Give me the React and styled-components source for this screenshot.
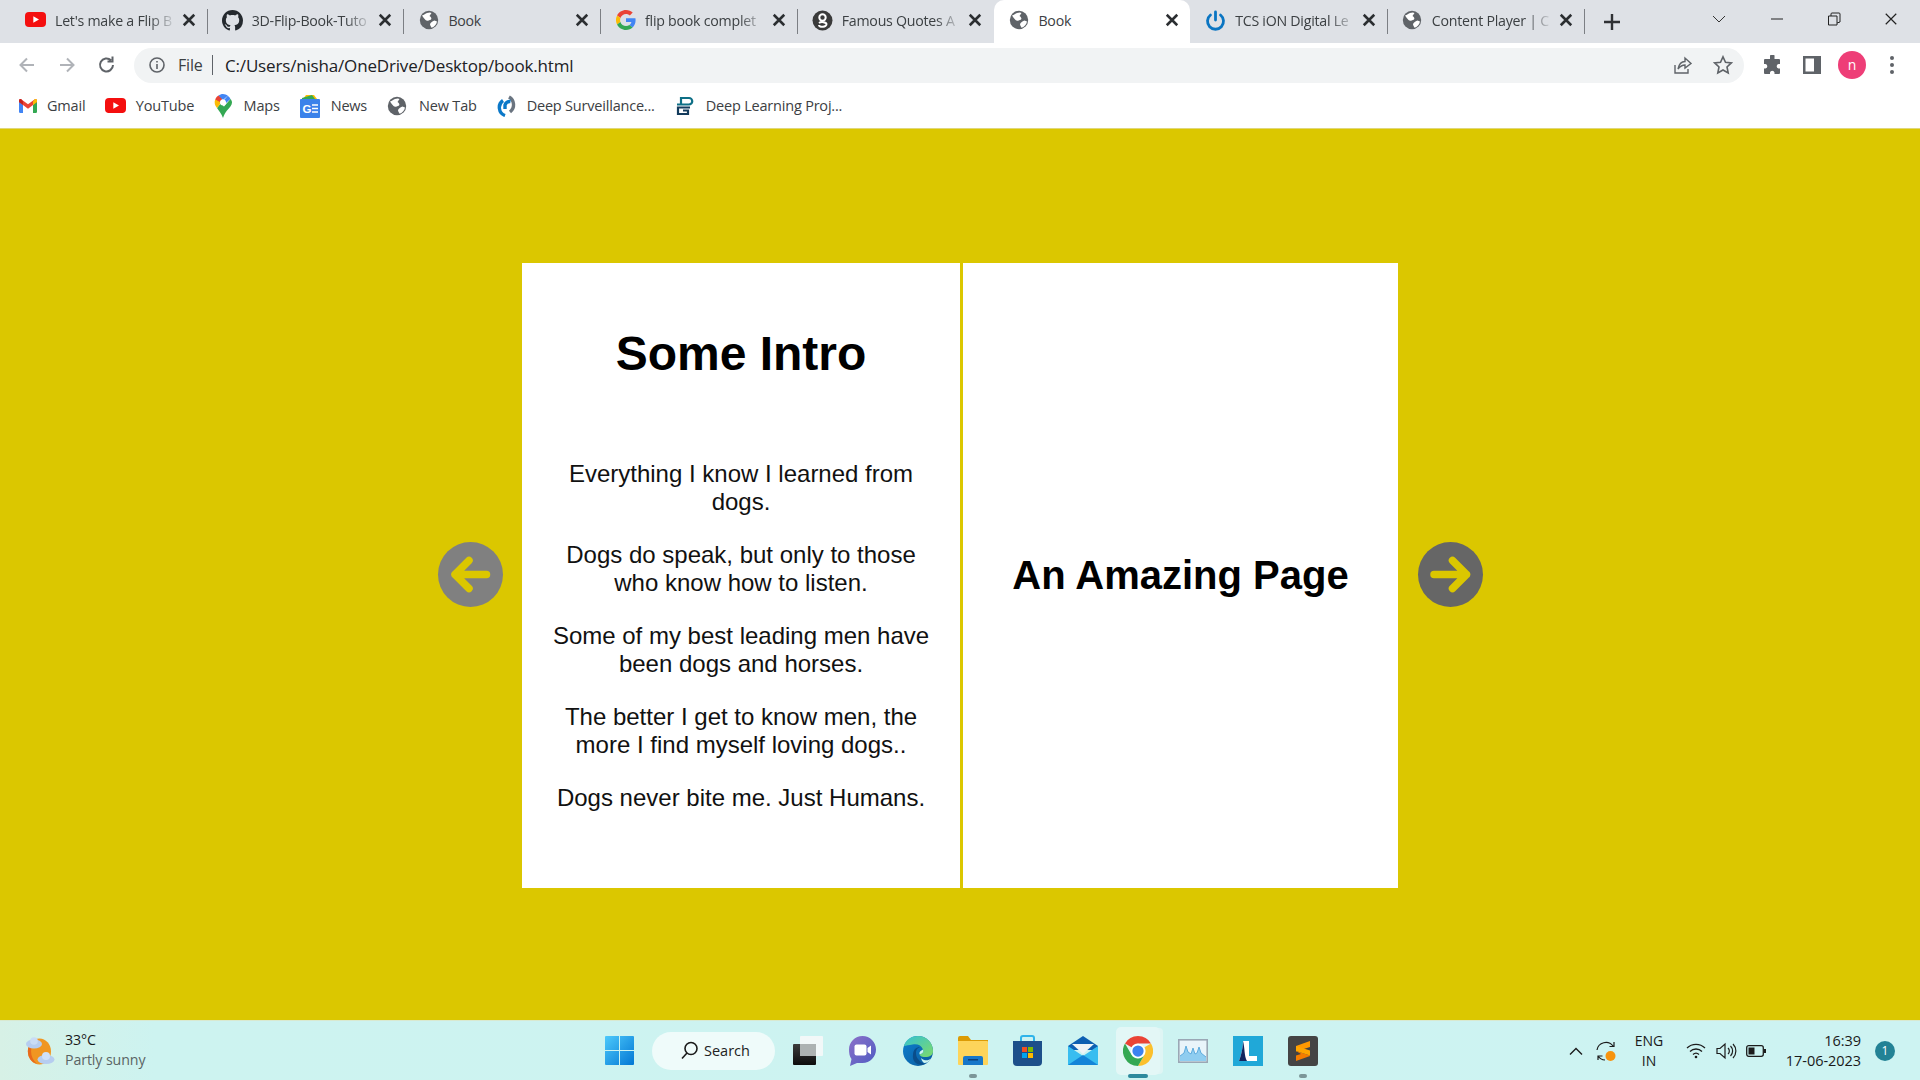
import React from "react";
import styled, { createGlobalStyle } from "styled-components";

const Global = createGlobalStyle`
  html, body { margin: 0; padding: 0; background: #dbc700; }
  * { box-sizing: border-box; }
`;
const Shell = styled.div`
  width: 1920px; height: 1080px; display: flex; flex-direction: column; overflow: hidden;
  font-family: "Open Sans", "Liberation Sans", sans-serif;
`;
const TabStrip = styled.div`
  height: 43px; background: #dee1e6; display: flex; align-items: stretch; padding-left: 11px; flex: none;
`;
const Tab = styled.div`
  width: 195.7px; flex: none; height: 43px; display: flex; align-items: center; padding: 0 11px 3px 14px;
  background: ${p => (p.$active ? "#fff" : "transparent")};
  border-radius: ${p => (p.$active ? "10px 10px 0 0" : "0")};
  color: #3c4043;
`;
const Favicon = styled.span`
  width: 21px; height: 21px; flex: none; display: flex; align-items: center; justify-content: center; margin-right: 9px;
`;
const TabTitle = styled.span`
  flex: 1; min-width: 0; overflow: hidden; white-space: nowrap; font-size: 14.2px; letter-spacing: -0.25px;
  -webkit-mask-image: ${p => (p.$fade ? "linear-gradient(to right,#000 78%,transparent 100%)" : "none")};
  mask-image: ${p => (p.$fade ? "linear-gradient(to right,#000 78%,transparent 100%)" : "none")};
`;
const TabClose = styled.span`
  width: 14px; height: 14px; flex: none; display: flex; margin-left: 6px; color: #2b2e31;
`;
const TabSep = styled.span`
  width: 1px; height: 25px; margin-top: 9px; flex: none; background: ${p => (p.$hidden ? "transparent" : "#7c7f84")};
`;
const NewTab = styled.span`
  width: 54px; display: flex; align-items: center; justify-content: center; color: #2f3134; flex: none;
`;
const Spacer = styled.div`flex: 1;`;
const WinChevron = styled.span`
  width: 30px; margin-right: 14px; display: flex; align-items: center; justify-content: center; height: 38px; color: #333; flex: none;
`;
const WinBtn = styled.span`
  width: ${p => p.$w || 57}px; height: 38px; display: flex; align-items: center; justify-content: center; color: #222; flex: none;
`;
const Toolbar = styled.div`
  height: 43px; background: #fff; display: flex; align-items: center; padding: 1px 0 0 7px; flex: none;
`;
const NavBtn = styled.span`
  width: 40px; height: 36px; flex: none; display: flex; align-items: center; justify-content: center;
  color: ${p => (p.$dim ? "#b0b3b8" : "#5f6368")};
`;
const AddressBar = styled.div`
  width: 1610px; height: 35px; margin: 0 0 0 7px; background: #f1f3f4; border-radius: 18px; display: flex; align-items: center; padding: 0 1px 0 14px; flex: none;
`;
const InfoIcon = styled.span`
  width: 18px; height: 18px; display: flex; color: #5f6368; flex: none;
`;
const FileLabel = styled.span`
  margin-left: 12px; font-size: 16px; color: #3c4043; letter-spacing: -0.2px; width: 34px; flex: none;
`;
const AddrDivider = styled.span`
  width: 1px; height: 20px; background: #5f6368; flex: none; margin-right: 12px;
`;
const UrlText = styled.span`
  font-size: 17px; color: #202124; white-space: nowrap; flex: 1; letter-spacing: -0.17px;
`;
const AddrAction = styled.span`
  width: 40px; height: 30px; flex: none; display: flex; align-items: center; justify-content: center; color: #5f6368;
`;
const ToolGroup = styled.div`
  display: flex; margin-left: 8px; align-items: center; flex: none;
`;
const Avatar = styled.span`
  width: 28px; height: 28px; border-radius: 50%; background: #ee3e77; color: #fff; font-size: 14px; display: flex; align-items: center; justify-content: center; padding-bottom: 2px;
`;
const Bookmarks = styled.div`
  height: 43px; background: #fff; border-bottom: 1px solid #e0d77a; display: flex; align-items: center; gap: 20px; padding: 0 0 3px 19px; flex: none;
`;
const Bookmark = styled.span`
  display: flex; align-items: center; gap: ${p => p.$gap || 10}px; font-size: 14.5px; color: #3c4043; letter-spacing: -0.2px; white-space: nowrap;
`;
const Stage = styled.main`
  flex: 1; background: #dbc700; display: flex; align-items: center; justify-content: center; gap: 19px; padding-left: 1px;
`;
const ArrowBtn = styled.button`
  width: 65px; height: 65px; padding: 0; border: none; border-radius: 50%; flex: none; display: flex;
  background: ${p => (p.$dark ? "#666666" : "#808080")}; color: #dbc700;
`;
const Book = styled.div`
  display: flex; gap: 3px; height: 625px; margin: 2px 1px 0 0; flex: none;
`;
const LeftPage = styled.section`
  width: 438px; background: #fff; padding: 64px 30px 0; text-align: center; font-family: "Liberation Sans", Arial, sans-serif; color: #000;
`;
const RightPage = styled.section`
  width: 435px; background: #fff; display: flex; align-items: center; justify-content: center; font-family: "Liberation Sans", Arial, sans-serif; color: #000;
`;
const PageTitle = styled.h1`
  font-size: 48px; line-height: 54px; font-weight: 700; margin: 0 0 79px;
`;
const PageHeading = styled.h2`
  font-size: 40px; font-weight: 700; margin: 0;
`;
const Quote = styled.p`
  font-size: 24px; line-height: 27.6px; margin: 0 0 25.8px; color: #111;
`;
const Taskbar = styled.footer`
  height: 60px; flex: none; display: flex; align-items: center; padding-left: 25px;
  background: linear-gradient(90deg,#d7f1e6 0%,#cdf3f0 8%,#cdf3f2 100%);
  color: #1a1a1a; border-top: 1px solid #d9e9d0;
`;
const Weather = styled.div`
  width: 580px; display: flex; align-items: center; gap: 10px; flex: none;
`;
const WeatherText = styled.div`
  display: flex; flex-direction: column; font-size: 14.2px; line-height: 20.5px; letter-spacing: -0.1px; padding-bottom: 1px;
`;
const WeatherSub = styled.span`
  color: #5a6464;
`;
const WinLogo = styled.span`
  width: 29px; height: 29px; flex: none; display: flex;
`;
const SearchPill = styled.div`
  width: 123px; height: 38px; margin: 0 5px 0 18px; border-radius: 19px; background: #effbfa; flex: none; display: flex; align-items: center; padding-left: 28px; gap: 5px; font-size: 14.5px; color: #222;
`;
const TaskIcon = styled.div`
  width: 55px; height: 59px; flex: none; position: relative; display: flex; align-items: center; justify-content: center;
`;
const ActiveBg = styled.span`
  position: absolute; left: 6px; top: 6px; width: 44px; height: 48px; border-radius: 5px; background: #e3f7f6; box-shadow: 4px 0 0 -1px #dff5f4;
`;
const TaskGlyph = styled.span`
  position: relative; display: flex;
`;
const RunDot = styled.span`
  position: absolute; bottom: 2px; left: 50%; transform: translateX(-50%); height: 4px; border-radius: 2px;
  width: ${p => (p.$active ? 20 : 8)}px; background: ${p => (p.$active ? "#2d8a9d" : "#7b9698")};
`;
const Tray = styled.div`
  margin-left: auto; display: flex; align-items: center; padding-right: 25px; flex: none;
`;
const TrayIcon = styled.span`
  width: 30px; height: 40px; display: flex; align-items: center; justify-content: center; flex: none; color: #1c1c1c;
`;
const Lang = styled.div`
  width: 56px; margin-right: 4px; text-align: center; font-size: 14px; line-height: 20px; flex: none;
`;
const Clock = styled.div`
  width: 90px; text-align: right; font-size: 14.5px; line-height: 20px; flex: none; letter-spacing: -0.05px;
`;
const Badge = styled.span`
  width: 20px; height: 20px; border-radius: 50%; background: #238295; color: #fff; margin-left: 14px; font-size: 12px; display: flex; align-items: center; justify-content: center; flex: none;
`;

const Globe = () => (
  <svg width="20" height="20" viewBox="0 0 20 20">
    <circle cx="10" cy="10" r="9.2" fill="#5f6368" />
    <path d="M3 5.500 C5 5 6.500 3.500 8 3 C9.500 2.500 11.500 2 12.500 3 L10.500 6 C12 7 13 8.500 12 9.500 C10 10.500 8 11.500 6.500 10 C5 8.500 4 7 3 5.500z" fill="#fff" />
    <path d="M11 14 C12 12 14 11 15.500 10.500 L18 11.500 C17.500 14.500 15 17 12.500 17.800 C12 16.500 11 15.500 11 14z" fill="#fff" />
  </svg>
);
const YouTube = ({ w = 21 }) => (
  <svg width={w} height={w * 0.72} viewBox="0 0 21 15">
    <rect width="21" height="15" rx="4" fill="#f40f0f" />
    <path d="M8.3 4.2 L14 7.5 L8.3 10.8 Z" fill="#fff" />
  </svg>
);
const GitHub = () => (
  <svg width="21" height="21" viewBox="0 0 16 16">
    <path fill="#24292e" d="M8 0C3.58 0 0 3.58 0 8c0 3.54 2.29 6.53 5.47 7.59.4.07.55-.17.55-.38 0-.19-.01-.82-.01-1.49-2.01.37-2.53-.49-2.69-.94-.09-.23-.48-.94-.82-1.13-.28-.15-.68-.52-.01-.53.63-.01 1.08.58 1.23.82.72 1.21 1.87.87 2.33.66.07-.52.28-.87.51-1.07-1.78-.2-3.64-.89-3.64-3.95 0-.87.31-1.59.82-2.15-.08-.2-.36-1.02.08-2.12 0 0 .67-.21 2.2.82.64-.18 1.32-.27 2-.27s1.36.09 2 .27c1.53-1.04 2.2-.82 2.2-.82.44 1.1.16 1.92.08 2.12.51.56.82 1.27.82 2.15 0 3.07-1.87 3.75-3.65 3.95.29.25.54.73.54 1.48 0 1.07-.01 1.93-.01 2.2 0 .21.15.46.55.38A8.01 8.01 0 0 0 16 8c0-4.42-3.58-8-8-8z" />
  </svg>
);
const Google = () => (
  <svg width="20" height="20" viewBox="0 0 48 48">
    <path fill="#EA4335" d="M24 9.5c3.5 0 6.7 1.2 9.2 3.6l6.9-6.9C35.9 2.4 30.5 0 24 0 14.6 0 6.5 5.4 2.6 13.2l8 6.2C12.5 13.7 17.8 9.5 24 9.5z" />
    <path fill="#4285F4" d="M47 24.5c0-1.6-.1-3.1-.4-4.5H24v9h12.9c-.6 3-2.2 5.500-4.800 7.200l7.700 6C44.300 37.600 47 31.600 47 24.500z" />
    <path fill="#FBBC05" d="M10.600 28.600A14.500 14.500 0 0 1 10.600 19.400l-8-6.200A24 24 0 0 0 2.600 34.800z" />
    <path fill="#34A853" d="M24 48c6.500 0 11.900-2.100 15.800-5.800l-7.700-6c-2.100 1.400-4.900 2.300-8.100 2.300-6.200 0-11.500-4.200-13.400-9.900l-8 6.200C6.500 42.600 14.600 48 24 48z" />
  </svg>
);
const GuardianG = () => (
  <svg width="21" height="21" viewBox="0 0 21 21">
    <circle cx="10.500" cy="10.500" r="10" fill="#3a3a3a" />
    <circle cx="10.500" cy="7.500" r="3.200" fill="none" stroke="#fff" strokeWidth="2" />
    <path d="M7 13 C 9 11.500 14 12 14.500 14 C 15 17 7 18 7 15" fill="none" stroke="#fff" strokeWidth="2" />
  </svg>
);
const TcsPower = () => (
  <svg width="21" height="21" viewBox="0 0 21 21" fill="none" stroke="#0a75c2" strokeWidth="2.800" strokeLinecap="round">
    <path d="M10.500 2 V10" />
    <path d="M5.500 5 A 8 8 0 1 0 15.500 5" />
  </svg>
);
const CloseX = ({ s = 12, w = 2 }) => (
  <svg width={s} height={s} viewBox="0 0 12 12" stroke="currentColor" strokeWidth={w} fill="none">
    <path d="M1.500 1.500 L10.500 10.500 M10.500 1.500 L1.500 10.500" />
  </svg>
);
const Line = ({ d, s = 20, w = 2, vb = 20 }) => (
  <svg width={s} height={s} viewBox={`0 0 ${vb} ${vb}`} fill="none" stroke="currentColor" strokeWidth={w}>
    <path d={d} />
  </svg>
);
const Gmail = () => (
  <svg width="18" height="14" viewBox="0 0 18 14">
    <path fill="#4285f4" d="M0 2 V12.800 A1.200 1.200 0 0 0 1.200 14 H4 V6z" />
    <path fill="#34a853" d="M18 2 V12.800 A1.200 1.200 0 0 1 16.800 14 H14 V6z" />
    <path fill="#ea4335" d="M0 1.500 C0 .2 1.500 -.4 2.500 .4 L9 5.300 L15.500 .4 C16.500 -.4 18 .2 18 1.500 V3 L14 6 L9 9.700 L4 6 L0 3z" />
    <path fill="#c5221f" d="M0 1.500 V3 L4 6 V2.500 L2.500 .4 C1.500 -.4 0 .2 0 1.500z" />
    <path fill="#fbbc04" d="M18 1.500 V3 L14 6 V2.500 L15.500 .4 C16.500 -.4 18 .2 18 1.500z" />
  </svg>
);
const MapsPin = () => (
  <svg width="18" height="24" viewBox="0 0 18 24">
    <path fill="#34a853" d="M3 14 C5 17 7.500 19.500 9 24 C10 20.500 11.500 18.500 13 16.500 L7 9z" />
    <path fill="#fbbc04" d="M1.200 5.500 C0 8.500 .8 11.500 3 14 L7 9 L6 6z" />
    <path fill="#ea4335" d="M1.200 5.500 L6 8 L9 4 L4.500 1.500 C3 2.300 2 3.700 1.200 5.500z" />
    <path fill="#4285f4" d="M9 0 C7.300 0 5.800 .6 4.500 1.500 L9 6 L13.800 1.800 C12.500 .7 10.800 0 9 0z" />
    <path fill="#4285f4" d="M13.800 1.800 L10 6 L12 9 L16.500 5 C15.800 3.800 14.900 2.700 13.800 1.800z" />
    <path fill="#34a853" d="M16.500 5 L7 16 L13 16.500 C15.500 13.500 18 11.500 18 8.500 C18 7.200 17.400 6 16.500 5z" />
    <circle cx="9" cy="8.500" r="3" fill="#fff" />
  </svg>
);
const NewsIcon = () => (
  <svg width="20" height="24" viewBox="0 0 20 24">
    <path d="M3 5 L6 1 H14 L17 5z" fill="#fbbc04" />
    <path d="M2 4 L12 1 L15 5 H2z" fill="#34a853" />
    <rect y="5" width="20" height="19" rx="1" fill="#3b82ea" />
    <text x="2.500" y="19" fontFamily="Liberation Sans" fontWeight="700" fontSize="11.500" fill="#fff">G</text>
    <path d="M12 11 H18 M12 14.500 H18 M12 18 H18" stroke="#fff" strokeWidth="1.500" />
  </svg>
);
const DeepArc = () => (
  <svg width="21" height="22" viewBox="0 0 21 22" fill="none" strokeWidth="3.400">
    <path d="M12 2 A 9 9 0 0 1 13 17" stroke="#6a7480" />
    <path d="M13.500 6.500 A 5 5 0 0 0 8 10 V 14" stroke="#0b78c8" />
    <path d="M6 5.500 A 8.500 8.500 0 0 0 8 20.500" stroke="#0b78c8" />
  </svg>
);
const DeepLearn = () => (
  <svg width="19" height="20" viewBox="0 0 19 20" fill="none" strokeWidth="2.200">
    <path d="M6 8 V2 H14 A3 3 0 0 1 14 8.500 H2" stroke="#0e6f86" />
    <path d="M15 11.500 H3 V18 H13 V14.500 H8" stroke="#143b5c" />
  </svg>
);
const Weathers = () => (
  <svg width="30" height="30" viewBox="0 0 30 30">
    <ellipse cx="14.500" cy="15.500" rx="11.500" ry="13" fill="#f09622" />
    <path d="M12 2.500 A 11.500 13 0 0 0 12 28 A 15 16 0 0 1 12 2.500z" fill="#e86a1c" />
    <ellipse cx="9" cy="8" rx="8" ry="4.500" fill="#b6cdf0" />
    <circle cx="9" cy="5" r="3.800" fill="#c9dcf6" />
    <ellipse cx="21" cy="23.500" rx="8.500" ry="4.500" fill="#b6cdf0" />
    <circle cx="21" cy="20" r="4" fill="#cfe0f8" />
  </svg>
);
const Windows = () => (
  <svg width="29" height="29" viewBox="0 0 29 29">
    <defs>
      <linearGradient id="win" x1="0" y1="0" x2="1" y2="1">
        <stop offset="0" stopColor="#4dc9fb" /><stop offset="1" stopColor="#0277d4" />
      </linearGradient>
    </defs>
    <path fill="url(#win)" d="M0 1 A1 1 0 0 1 1 0 H14 V14 H0z M15 0 H28 A1 1 0 0 1 29 1 V14 H15z M0 15 H14 V29 H1 A1 1 0 0 1 0 28z M15 15 H29 V28 A1 1 0 0 1 28 29 H15z" />
  </svg>
);
const TaskView = () => (
  <svg width="30" height="29" viewBox="0 0 30 29">
    <defs><linearGradient id="tv" x1="0" y1="0" x2="0" y2="1"><stop offset="0" stopColor="#3c3c3c" /><stop offset="1" stopColor="#0c0c0c" /></linearGradient></defs>
    <rect x="0" y="8" width="23" height="21" rx="1" fill="url(#tv)" />
    <rect x="7" y="0" width="23" height="20" rx="1" fill="#f2f8f8" />
    <rect x="7" y="8" width="16" height="12" fill="#adb2b2" />
  </svg>
);
const Chat = () => (
  <svg width="29" height="31" viewBox="0 0 29 31">
    <defs><linearGradient id="ch" x1="0" y1="0" x2="1" y2="1"><stop offset="0" stopColor="#8c70c8" /><stop offset="1" stopColor="#4e5bc3" /></linearGradient></defs>
    <path fill="url(#ch)" d="M14.500 1 C22 1 28 7 28 14.500 C28 22 22 28 14.500 28 H9 L2 31 L3.500 24 C1.500 21.500 1 18 1 14.500 C1 7 7 1 14.500 1z" />
    <rect x="6.500" y="9.500" width="12" height="11" rx="2" fill="#fff" />
    <path d="M19.500 13 L23 10.500 V19.500 L19.500 17z" fill="#fff" />
  </svg>
);
const Edge = () => (
  <svg width="30" height="30" viewBox="0 0 30 30">
    <defs>
      <linearGradient id="e1" x1="0" y1="0" x2="1" y2="1"><stop offset="0" stopColor="#0d80d0" /><stop offset="1" stopColor="#0b5a9c" /></linearGradient>
      <linearGradient id="e2" x1="0" y1="0" x2="1" y2="1"><stop offset="0" stopColor="#35c1d2" /><stop offset="1" stopColor="#7edb6a" /></linearGradient>
    </defs>
    <circle cx="15" cy="15" r="15" fill="url(#e1)" />
    <path fill="url(#e2)" d="M1 10 C3 3 9 0 15 0 C24 0 30 7 30 15 C30 19 27 21 22 21 C18 21 16.500 19.500 16.500 18 C19.500 18 21 16 20 13.500 C18.500 9 14 7.500 9.500 8.500 C6 9 3 9.500 1 10z" />
    <path fill="#cdf3f1" d="M16.500 18 C16 15 19 14.500 20 13.500 C21 16 19.500 18 16.500 18z M18 22 C21 25 25.500 25 28 22.500 C27 25 24 27 21 27 C19 25 18.500 24 18 22z" />
    <path fill="#0a4d8a" d="M10 19 C10 13 14 11 17 11 C12 12.500 12 19 15 23 C17 26 20 27.500 22 28 C14 31 9 25 10 19z" />
  </svg>
);
const Folder = () => (
  <svg width="30" height="29" viewBox="0 0 30 29">
    <path d="M0 2 A2 2 0 0 1 2 0 H10 L13 4 H30 V10 H0z" fill="#dc9b05" />
    <path d="M0 5 H29 A1 1 0 0 1 30 6 V28 A1 1 0 0 1 29 29 H1 A1 1 0 0 1 0 28z" fill="#fdd45a" />
    <path d="M5 22 A2 2 0 0 1 7 20 H23 A2 2 0 0 1 25 22 V29 H5z" fill="#1677c9" />
    <rect x="10" y="23" width="10" height="1.500" fill="#0b3f78" />
  </svg>
);
const Store = () => (
  <svg width="29" height="31" viewBox="0 0 29 31">
    <path d="M8 7 V3 A2 2 0 0 1 10 1 H19 A2 2 0 0 1 21 3 V7" fill="none" stroke="#2fb4ea" strokeWidth="2" />
    <path d="M0 6 H29 V27 A4 4 0 0 1 25 31 H4 A4 4 0 0 1 0 27z" fill="#1d4f8a" />
    <rect x="9" y="12" width="5" height="5" fill="#f25022" /><rect x="15" y="12" width="5" height="5" fill="#7fba00" />
    <rect x="9" y="18" width="5" height="5" fill="#00a4ef" /><rect x="15" y="18" width="5" height="5" fill="#ffb900" />
  </svg>
);
const Mail = () => (
  <svg width="30" height="29" viewBox="0 0 30 29">
    <path d="M0 10 L15 0 L30 10 V14 H0z" fill="#0d5fb2" />
    <path d="M4 8 H26 L15 18z" fill="#eef4f7" />
    <path d="M0 10 L15 20 L30 10 V29 H0z" fill="#38bdf0" />
    <path d="M0 29 L15 19 L30 29z" fill="#1384d8" />
  </svg>
);
const Chrome = () => (
  <svg width="30" height="30" viewBox="0 0 48 48">
    <path fill="#ea4335" d="M24 0 A24 24 0 0 1 44.800 12 H24 A12 12 0 0 0 13.600 18 L3.200 12 A24 24 0 0 1 24 0z" />
    <path fill="#fbc02d" d="M44.800 12 A24 24 0 0 1 24 48 L34.400 30 A12 12 0 0 0 34.400 18 Z" />
    <path fill="#34a853" d="M3.200 12 L13.600 30 A12 12 0 0 0 34.400 30 L24 48 A24 24 0 0 1 3.200 12z" />
    <circle cx="24" cy="24" r="11.500" fill="#fff" />
    <circle cx="24" cy="24" r="9" fill="#3b82f0" />
  </svg>
);
const Monitor = () => (
  <svg width="30" height="24" viewBox="0 0 30 24">
    <rect x=".8" y=".8" width="28.400" height="22.400" fill="#e9f4fa" stroke="#9aa7b5" strokeWidth="1.600" />
    <path d="M2 21 V17 L6 14 L8 7 L10 13 L13 15 L15 9 L17 15 L19 14 L21 8 L23 14 L28 18 V22 H2z" fill="#8fcdf0" />
    <path d="M2 17 L6 14 L8 7 L10 13 L13 15 L15 9 L17 15 L19 14 L21 8 L23 14 L28 18" fill="none" stroke="#4a9fd8" strokeWidth=".8" />
  </svg>
);
const LApp = () => (
  <svg width="30" height="30" viewBox="0 0 30 30">
    <rect width="30" height="30" fill="#20a8d8" />
    <path d="M10 5 H16 V20 H24 V25 H6 C8 20 10 12 10 5z" fill="#fff" />
    <path d="M10 5 C10 12 8 20 6 25 H14 C11 20 12 12 10 5z" fill="#10245e" />
  </svg>
);
const Sublime = () => (
  <svg width="30" height="30" viewBox="0 0 30 30">
    <rect width="30" height="30" rx="3" fill="#444" />
    <path d="M22 5 V11 L8 15.500 V10z" fill="#ff9800" />
    <path d="M8 15 L22 19.500 V20 L8 25 V19.500 L13 18z" fill="#f57c00" />
    <path d="M8 10 L22 14.500 V19.500 L8 15z" fill="#ffa500" />
  </svg>
);

const tabs = [
  { t: "Let's make a Flip B", i: <YouTube />, fade: 1 },
  { t: "3D-Flip-Book-Tuto", i: <GitHub />, fade: 1 },
  { t: "Book", i: <Globe /> },
  { t: "flip book complet", i: <Google />, fade: 1 },
  { t: "Famous Quotes A", i: <GuardianG />, fade: 1, noSep: 1 },
  { t: "Book", i: <Globe />, active: 1, noSep: 1 },
  { t: "TCS iON Digital Le", i: <TcsPower />, fade: 1 },
  { t: "Content Player | C", i: <Globe />, fade: 1 },
];
const marks = [
  { t: "Gmail", i: <Gmail />, g: 10 },
  { t: "YouTube", i: <YouTube />, g: 9.5 },
  { t: "Maps", i: <MapsPin />, g: 11.5 },
  { t: "News", i: <NewsIcon />, g: 11 },
  { t: "New Tab", i: <Globe />, g: 12 },
  { t: "Deep Surveillance...", i: <DeepArc />, g: 9 },
  { t: "Deep Learning Proj...", i: <DeepLearn />, g: 12 },
];
const apps = [
  { i: <TaskView /> }, { i: <Chat /> }, { i: <Edge /> }, { i: <Folder />, dot: 1 }, { i: <Store /> },
  { i: <Mail /> }, { i: <Chrome />, active: 1 }, { i: <Monitor /> }, { i: <LApp /> }, { i: <Sublime />, dot: 1 },
];
const quotes = [
  "Everything I know I learned from dogs.",
  "Dogs do speak, but only to those who know how to listen.",
  "Some of my best leading men have been dogs and horses.",
  "The better I get to know men, the more I find myself loving dogs..",
  "Dogs never bite me. Just Humans.",
];

export default function App() {
  return (
    <Shell>
      <Global />
      <TabStrip>
        {tabs.map((x, n) => (
          <React.Fragment key={n}>
            <Tab $active={x.active}>
              <Favicon>{x.i}</Favicon>
              <TabTitle $fade={x.fade}>{x.t}</TabTitle>
              <TabClose><CloseX s={14} w={2.200} /></TabClose>
            </Tab>
            <TabSep $hidden={x.noSep} />
          </React.Fragment>
        ))}
        <NewTab><Line s={18} w={2.400} vb={18} d="M9 1 V17 M1 9 H17" /></NewTab>
        <Spacer />
        <WinChevron><Line s={14} w={1} vb={14} d="M1 4 L7 10 L13 4" /></WinChevron>
        <WinBtn><Line s={14} w={1} vb={14} d="M1 7 H13" /></WinBtn>
        <WinBtn><Line s={14} w={1} vb={14} d="M1.500 4 H10 V13 H1.500z M4 4 V2 A1 1 0 0 1 5 1 H12 A1 1 0 0 1 13 2 V10 L10 11" /></WinBtn>
        <WinBtn $w={58}><CloseX s={14} w={1} /></WinBtn>
      </TabStrip>
      <Toolbar>
        <NavBtn $dim><Line w={2} d="M17 10 H4 M10 3.500 L3.500 10 L10 16.500" /></NavBtn>
        <NavBtn $dim><Line w={2} d="M3 10 H16 M10 3.500 L16.500 10 L10 16.500" /></NavBtn>
        <NavBtn><Line w={2} d="M16 10 A6.500 6.500 0 1 1 14 5.200 M15.500 1.500 V6.500 H10.500" /></NavBtn>
        <AddressBar>
          <InfoIcon>
            <svg width="18" height="18" viewBox="0 0 18 18" fill="none" stroke="currentColor" strokeWidth="1.600">
              <circle cx="9" cy="9" r="7" /><path d="M9 8 V13 M9 5 V6.500" />
            </svg>
          </InfoIcon>
          <FileLabel>File</FileLabel>
          <AddrDivider />
          <UrlText>C:/Users/nisha/OneDrive/Desktop/book.html</UrlText>
          <AddrAction><Line w={1.400} d="M2 10 V18 H15 V14 M5 14 C6 9 9 6.500 12 6.500 V3 L18 8.500 L12 13 V10 C9 10 7 11.500 5 14z" /></AddrAction>
          <AddrAction><Line w={1.600} d="M10 1.800 L12.500 7.300 L18.300 7.900 L14 12 L15.200 18 L10 15 L4.800 18 L6 12 L1.700 7.900 L7.500 7.300z" /></AddrAction>
        </AddressBar>
        <ToolGroup>
          <NavBtn>
            <svg width="20" height="20" viewBox="0 0 20 20" fill="currentColor">
              <path d="M8 1 A2.300 2.300 0 0 1 12.500 2 V4 H17 A1 1 0 0 1 18 5 V9 H16.500 A2.300 2.300 0 0 0 16.500 13.500 H18 V18 A1 1 0 0 1 17 19 H12.500 V17.500 A2.300 2.300 0 0 0 8 17.500 V19 H3 A1 1 0 0 1 2 18 V13.500 H3.500 A2.300 2.300 0 0 0 3.500 9 H2 V5 A1 1 0 0 1 3 4 H8z" />
            </svg>
          </NavBtn>
          <NavBtn>
            <svg width="18" height="18" viewBox="0 0 18 18">
              <path fillRule="evenodd" fill="currentColor" d="M0 0 H18 V18 H0z M2.500 2.500 V15.500 H11 V2.500z" />
            </svg>
          </NavBtn>
          <NavBtn><Avatar>n</Avatar></NavBtn>
          <NavBtn>
            <svg width="6" height="20" viewBox="0 0 6 20" fill="currentColor">
              <circle cx="3" cy="3" r="2" /><circle cx="3" cy="10" r="2" /><circle cx="3" cy="17" r="2" />
            </svg>
          </NavBtn>
        </ToolGroup>
      </Toolbar>
      <Bookmarks>
        {marks.map(m => (
          <Bookmark key={m.t} $gap={m.g}>{m.i}{m.t}</Bookmark>
        ))}
      </Bookmarks>
      <Stage>
        <ArrowBtn aria-label="Previous">
          <svg width="65" height="65" viewBox="0 0 65 65" fill="none" stroke="currentColor" strokeWidth="7.500" strokeLinecap="round" strokeLinejoin="round">
            <path d="M48.500 32.500 H17 M31 18.500 L17 32.500 L31 46.500" />
          </svg>
        </ArrowBtn>
        <Book>
          <LeftPage>
            <PageTitle>Some Intro</PageTitle>
            {quotes.map(q => <Quote key={q}>{q}</Quote>)}
          </LeftPage>
          <RightPage>
            <PageHeading>An Amazing Page</PageHeading>
          </RightPage>
        </Book>
        <ArrowBtn $dark aria-label="Next">
          <svg width="65" height="65" viewBox="0 0 65 65" fill="none" stroke="currentColor" strokeWidth="7.500" strokeLinecap="round" strokeLinejoin="round">
            <path d="M16 32.500 H48.500 M34.500 18.500 L48.500 32.500 L34.500 46.500" />
          </svg>
        </ArrowBtn>
      </Stage>
      <Taskbar>
        <Weather>
          <Weathers />
          <WeatherText>
            <span>33°C</span>
            <WeatherSub>Partly sunny</WeatherSub>
          </WeatherText>
        </Weather>
        <WinLogo><Windows /></WinLogo>
        <SearchPill>
          <svg width="19" height="19" viewBox="0 0 19 19" fill="none" stroke="#1a1a1a" strokeWidth="1.600">
            <circle cx="11" cy="7.500" r="6" /><path d="M7 12 L2 17.500" />
          </svg>
          Search
        </SearchPill>
        {apps.map((a, n) => (
          <TaskIcon key={n}>
            {a.active && <ActiveBg />}
            <TaskGlyph>{a.i}</TaskGlyph>
            {(a.dot || a.active) && <RunDot $active={a.active} />}
          </TaskIcon>
        ))}
        <Tray>
          <TrayIcon><Line s={16} w={1.400} vb={16} d="M2 11.500 L8 5.500 L14 11.500" /></TrayIcon>
          <TrayIcon>
            <svg width="22" height="22" viewBox="0 0 22 22" fill="none" stroke="#1c1c1c" strokeWidth="1.200">
              <path d="M2 10 A9 9 0 0 1 18 6 M19 2 V6.500 H14.500 M3 20 V16 H7.500 M3 16 A9 9 0 0 0 10 20" />
              <circle cx="15.500" cy="16" r="5" fill="#f7930e" stroke="none" />
            </svg>
          </TrayIcon>
          <Lang>ENG<br />IN</Lang>
          <TrayIcon>
            <svg width="20" height="18" viewBox="0 0 20 18" fill="none" stroke="#1c1c1c" strokeWidth="1.300">
              <path d="M1 6 A13 13 0 0 1 19 6 M4 9.500 A8.500 8.500 0 0 1 16 9.500 M7 12.500 A4.500 4.500 0 0 1 13 12.500" />
              <circle cx="10" cy="15" r="1.300" fill="#1c1c1c" stroke="none" />
            </svg>
          </TrayIcon>
          <TrayIcon>
            <svg width="21" height="18" viewBox="0 0 21 18" fill="none" stroke="#1c1c1c" strokeWidth="1.200">
              <path d="M1 6.500 H4 L9 2 V16 L4 11.500 H1z M12 6 A4 4 0 0 1 12 12 M14.500 4 A7 7 0 0 1 14.500 14 M17 2 A10 10 0 0 1 17 16" />
            </svg>
          </TrayIcon>
          <TrayIcon>
            <svg width="20" height="12" viewBox="0 0 20 12">
              <rect x=".7" y=".7" width="16.600" height="10.600" rx="2" fill="none" stroke="#1c1c1c" strokeWidth="1.300" />
              <rect x="2.500" y="2.500" width="6" height="7" fill="#1c1c1c" />
              <rect x="18" y="4" width="2" height="4" fill="#1c1c1c" />
            </svg>
          </TrayIcon>
          <Clock>16:39<br />17-06-2023</Clock>
          <Badge>1</Badge>
        </Tray>
      </Taskbar>
    </Shell>
  );
}
